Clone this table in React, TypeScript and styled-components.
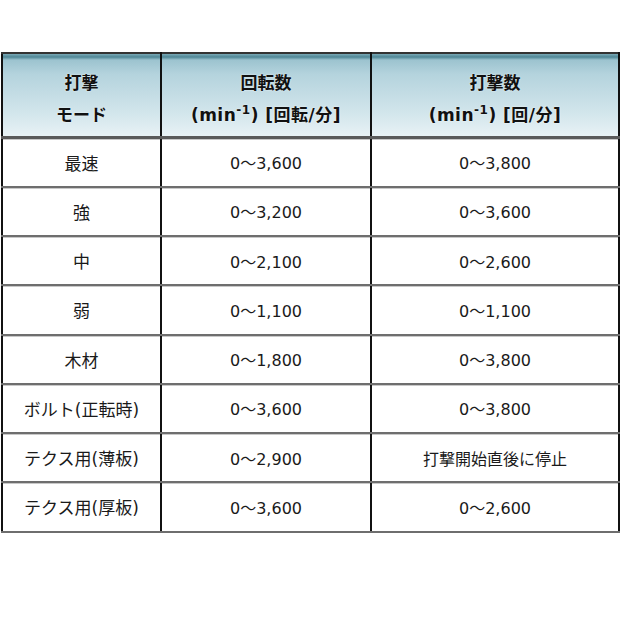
import React from 'react'
import styled, { createGlobalStyle } from 'styled-components'

const GlobalStyle = createGlobalStyle`
    html, body {
        margin: 0;
        padding: 0;
        background: #ffffff;
    }
    body {
        font-family: "DejaVu Sans", "Noto Sans CJK JP", sans-serif;
        color: #1a1a1a;
    }
`

const Page = styled.div`
    padding: 52px 0 0 1px;
    width: 620px;
`

const SpecTable = styled.table`
    width: 617px;
    border-collapse: collapse;
    table-layout: fixed;
    border-left: 2px solid #111;
    border-right: 2px solid #111;
    border-top: 2px solid #333;
    font-size: 16px;
`

const HeadCell = styled.th`
    box-sizing: border-box;
    height: 84px;
    padding: 9px 0 0;
    font-weight: bold;
    font-size: 17px;
    line-height: 32px;
    text-align: center;
    color: #111;
    border-left: 2px solid #111;
    border-bottom: 3px solid #5a5a5a;
    background: linear-gradient(
        to bottom,
        #7aa9b6 0px,
        #4f8796 3px,
        #9cc3cf 6px,
        #b4d3dd 20px,
        #d3e6ec 60px,
        #eaf3f6 84px
    );
    text-shadow: 0 0 2px rgba(255, 255, 255, 0.8);

    &:first-child {
        border-left: none;
    }
`

const UnitLine = styled.span`
    letter-spacing: 0.5px;
`

const BodyCell = styled.td<{ $mode?: boolean }>`
    height: 47.25px;
    padding: 0;
    text-align: center;
    font-size: ${(p) => (p.$mode ? '17px' : '16px')};
    border-left: 2px solid #111;
    border-bottom: 2px solid #6e6e6e;
    box-shadow: inset 0 1px 0 #c8c8c8;

    &:first-child {
        border-left: none;
    }
`

const Sup = styled.sup`
    font-size: 12px;
    vertical-align: 7px;
    line-height: 0;
`

type Row = {
    mode: string;
    rotation: string;
    impact: string;
}

const rows: Row[] = [
    { mode: '最速', rotation: '0～3,600', impact: '0～3,800' },
    { mode: '強', rotation: '0～3,200', impact: '0～3,600' },
    { mode: '中', rotation: '0～2,100', impact: '0～2,600' },
    { mode: '弱', rotation: '0～1,100', impact: '0～1,100' },
    { mode: '木材', rotation: '0～1,800', impact: '0～3,800' },
    { mode: 'ボルト(正転時)', rotation: '0～3,600', impact: '0～3,800' },
    { mode: 'テクス用(薄板)', rotation: '0～2,900', impact: '打撃開始直後に停止' },
    { mode: 'テクス用(厚板)', rotation: '0～3,600', impact: '0～2,600' },
]

const App: React.FC = () => {
    return (
        <Page>
            <GlobalStyle />
            <SpecTable>
                <colgroup>
                    <col style={{ width: 159 }} />
                    <col style={{ width: 210 }} />
                    <col style={{ width: 248 }} />
                </colgroup>
                <thead>
                    <tr>
                        <HeadCell>打撃<br />モード</HeadCell>
                        <HeadCell>回転数<br /><UnitLine>(min<Sup>-1</Sup>) [回転/分]</UnitLine></HeadCell>
                        <HeadCell>打撃数<br /><UnitLine>(min<Sup>-1</Sup>) [回/分]</UnitLine></HeadCell>
                    </tr>
                </thead>
                <tbody>
                    {rows.map((r) => (
                        <tr key={r.mode}>
                            <BodyCell $mode>{r.mode}</BodyCell>
                            <BodyCell>{r.rotation}</BodyCell>
                            <BodyCell>{r.impact}</BodyCell>
                        </tr>
                    ))}
                </tbody>
            </SpecTable>
        </Page>
    )
}

export default App
